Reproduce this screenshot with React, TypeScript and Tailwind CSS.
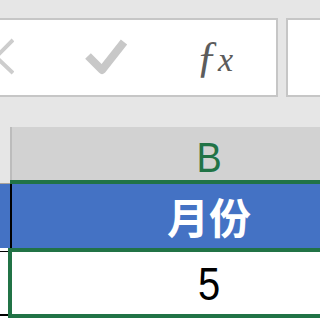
export default function App() {
  return (
    <div className="w-[320px] h-[320px] overflow-hidden bg-[#e6e6e6] flex flex-col pt-[18px]">
      {/* formula bar */}
      <div className="flex h-[79px] gap-[8px] shrink-0">
        <div className="w-[278px] shrink-0 bg-white border-2 border-l-0 border-[#c6c6c6] flex items-center">
          <svg width="14" height="40" viewBox="0 0 14 40" className="shrink-0 mt-[-2px]">
            <path d="M-4 20 L13 3 M-4 20 L13 36" stroke="#cdcdcd" strokeWidth="4" fill="none" />
          </svg>
          <svg width="46" height="40" viewBox="0 0 46 40" className="ml-[70px] shrink-0 mt-[2px]">
            <path d="M4 17 L18 31 L40 3" stroke="#c8c8c8" strokeWidth="8" fill="none" strokeLinejoin="round" />
          </svg>
          <div className="ml-[66px] flex items-baseline italic text-[#5c5c5c] mt-[-2px]" style={{ fontFamily: '"Liberation Serif", serif' }}>
            <span className="text-[44px] leading-none">ƒ</span>
            <span className="text-[34px] leading-none">x</span>
          </div>
        </div>
        <div className="flex-1 bg-white border-2 border-r-0 border-[#c6c6c6]" />
      </div>

      <div className="h-[30px] shrink-0" />

      {/* column header */}
      <div className="flex h-[53px] shrink-0">
        <div className="w-[10px] shrink-0 bg-[#e6e6e6]" />
        <div className="w-[2px] shrink-0 bg-[#bcbcbc]" />
        <div
          className="w-[394px] shrink-0 bg-[#d2d2d2] flex items-center justify-center pt-[9px] text-[42px] leading-none text-[#217346]"
          style={{ fontFamily: '"Liberation Sans", sans-serif' }}
        >
          <span className="inline-block scale-x-90">B</span>
        </div>
      </div>

      {/* row 1 */}
      <div className="flex h-[68px] shrink-0">
        <div className="w-[10px] shrink-0 flex flex-col">
          <div className="h-[3px] bg-[#e6e6e6]" />
          <div className="h-[1px] bg-[#a9a39b]" />
          <div className="flex-1 bg-[#4472c4]" />
        </div>
        <div className="w-[2px] shrink-0 flex flex-col">
          <div className="h-[4px] bg-[#217346]" />
          <div className="flex-1 bg-black" />
        </div>
        <div
          className="w-[394px] shrink-0 border-t-4 border-[#217346] bg-[#4472c4] flex items-center justify-center text-white font-bold text-[42px] leading-none"
          style={{ fontFamily: '"Noto Sans CJK SC", "Noto Sans", sans-serif' }}
        >
          月份
        </div>
      </div>

      {/* row 2 */}
      <div className="flex h-[70px] shrink-0 bg-white">
        <div className="w-[8px] shrink-0 flex flex-col">
          <div className="h-[3px]" />
          <div className="h-[1px] bg-black" />
          <div className="flex-1" />
          <div className="h-[2px] bg-black" />
          <div className="h-[2px]" />
        </div>
        <div
          className="w-[402px] shrink-0 border-4 border-[#217346] flex items-center justify-center text-black text-[47px] leading-none"
          style={{ fontFamily: '"Liberation Sans", sans-serif' }}
        >
          <span className="inline-block scale-x-85">5</span>
        </div>
      </div>
      <div className="flex-1 bg-white" />
    </div>
  );
}
